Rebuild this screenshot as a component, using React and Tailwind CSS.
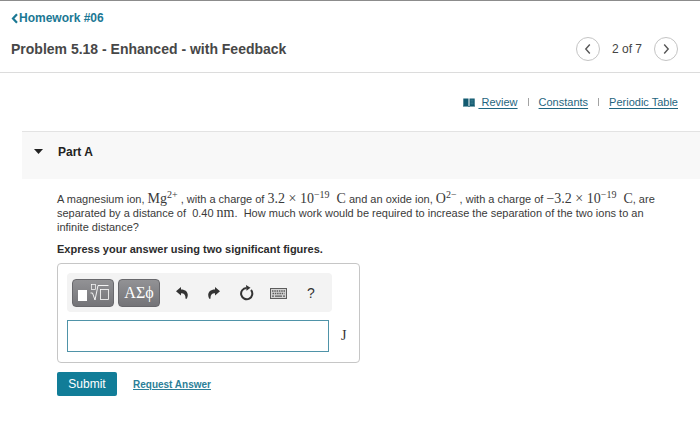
import { useState } from 'react';

const mathFont = "font-['Liberation_Serif',serif] text-sm leading-none";

function Sci({ sign, exponent }) {
  return (
    <span className={`${mathFont} whitespace-nowrap`}>
      {sign}3.2 × 10<sup className="text-[10px]">{exponent}</sup>&nbsp; C
    </span>
  );
}

function Ion({ symbol, charge }) {
  return (
    <span className={`${mathFont} whitespace-nowrap`}>
      {symbol}
      <sup className="text-[10px]">{charge}</sup>
    </span>
  );
}

function PageButton({ label, d }) {
  return (
    <button aria-label={label} className="flex size-6 items-center justify-center rounded-full border border-[#c4c4c4] text-[#555]">
      <svg className="size-3" viewBox="0 0 12 12" fill="none" stroke="currentColor" strokeWidth="1.4">
        <path d={d} />
      </svg>
    </button>
  );
}

function UndoIcon({ className = '' }) {
  return (
    <svg className={`h-3 w-3 ${className}`} viewBox="0 0 12 12" fill="currentColor">
      <path d="M5 0 0 4.200l5 4.300V6.300c3-.2 4.700 1.400 4.500 5.500h1.300C13.200 7 11.200 2.400 5 2.400Z" />
    </svg>
  );
}

function Header() {
  return (
    <header className="border-t border-b border-t-[#8c8c8c] border-b-[#dcdcdc] px-[11px] pt-[9px] pb-[11px]">
      <a href="#homework" className="flex h-4 w-fit items-center text-xs font-bold text-[#1b7894]">
        <svg className="h-[11px] w-2" viewBox="0 0 8 11" fill="none" stroke="currentColor" strokeWidth="2.2">
          <path d="M6 1.200 2 5.500 6 9.800" />
        </svg>
        Homework #06
      </a>
      <div className="mt-[11px] flex items-center justify-between pr-[11px]">
        <h1 className="text-sm font-bold text-[#474747]">Problem 5.18 - Enhanced - with Feedback</h1>
        <div className="flex items-center gap-3 text-xs text-[#444]">
          <PageButton label="Previous problem" d="M7.800 1.500 3.800 6l4 4.500" />
          <span>2 of 7</span>
          <PageButton label="Next problem" d="M4.200 1.500 8.200 6l-4 4.500" />
        </div>
      </div>
    </header>
  );
}

function ResourceLinks() {
  return (
    <nav className="flex h-[58px] items-center justify-end pr-[22px] text-[11px] text-[#1f6580]">
      <a href="#review" className="flex items-center">
        <svg className="mr-[3px] h-[9px] w-3" viewBox="0 0 12 9" fill="#125a70">
          <path d="M.3.500h5.200v7.600H.3ZM6.500.500h5.200v7.600H6.500Z" />
          <path d="M0 8.200h5l1 .5 1-.5h5" fill="none" stroke="#125a70" strokeWidth=".8" />
          <path d="M7.500 2.200h3M7.500 4h3M7.500 5.800h3" stroke="#5d98aa" strokeWidth=".6" />
        </svg>
        <span className="whitespace-pre underline underline-offset-2"> Review</span>
      </a>
      <span className="mx-[10px] h-2 w-px bg-[#a3a3a3]" />
      <a href="#constants" className="underline underline-offset-2">Constants</a>
      <span className="mx-[10px] h-2 w-px bg-[#a3a3a3]" />
      <a href="#periodic" className="underline underline-offset-2">Periodic Table</a>
    </nav>
  );
}

function AnswerBox() {
  const [answer, setAnswer] = useState('');
  const dark = 'flex h-7 w-[42px] items-center justify-center rounded border border-[#68686c] bg-linear-to-b from-[#929295] to-[#747478] text-white';

  return (
    <div className="mt-[7px] w-[303px] rounded border border-[#c6c6c6] px-[9px] pt-[9px] pb-[10px]">
      <div className="flex h-[39px] w-[265px] items-center rounded bg-[#f3f3f3] px-[5px] text-[#333]">
        <button aria-label="Templates" className={dark}>
          <svg className="h-5 w-8" viewBox="0 0 32 20" fill="none" stroke="#fff">
            <rect x="1" y="7" width="9" height="11" fill="#fff" stroke="none" />
            <rect x="14.500" y="1.500" width="4" height="5" strokeWidth=".7" />
            <path d="M13.500 10h2l2.500 7L21 2.500h10.500" strokeWidth=".9" />
            <rect x="23.500" y="6.500" width="8" height="10" strokeWidth=".8" />
          </svg>
        </button>
        <button className={`${dark} ml-1 font-['Liberation_Serif',serif] text-base`}>ΑΣϕ</button>
        <button aria-label="Undo" className="ml-4"><UndoIcon /></button>
        <button aria-label="Redo" className="ml-5"><UndoIcon className="-scale-x-100" /></button>
        <button aria-label="Reset" className="ml-5">
          <svg className="h-4 w-[14px]" viewBox="0 0 14 16" fill="none" stroke="currentColor" strokeWidth="2">
            <path d="M11 5a5.600 5.600 0 1 1-4.500-2" />
            <path d="M6 0 10.500 2.700 6.500 5.800Z" fill="currentColor" stroke="none" />
          </svg>
        </button>
        <button aria-label="Keyboard shortcuts" className="ml-4">
          <svg className="mt-0.5 h-[11px] w-[17px]" viewBox="0 0 17 11" fill="none" stroke="#5c5c5c">
            <rect x=".5" y=".5" width="16" height="10" fill="#d4d4d4" />
            <path d="M2 3h13M2.500 5.500h12" strokeDasharray="1.500 .8" strokeWidth="1.300" />
            <path d="M2 8.200h2M5 8.200h7M13 8.200h2" strokeWidth="1.300" />
          </svg>
        </button>
        <button aria-label="Help" className="ml-5 text-sm">?</button>
      </div>
      <div className="mt-2 flex items-center gap-3">
        <input
          id="work"
          aria-label="Work in joules"
          value={answer}
          onChange={(e) => setAnswer(e.target.value)}
          className="h-8 w-[262px] border border-[#4f93a8] bg-white px-2 text-sm outline-none"
        />
        <label htmlFor="work" className="font-['Liberation_Serif',serif] text-sm text-[#333]">J</label>
      </div>
    </div>
  );
}

export default function App() {
  return (
    <div className="bg-white font-['Liberation_Sans',Arial,sans-serif] text-[#3a3a3a]">
      <Header />
      <ResourceLinks />
      <main className="ml-[22px]">
        <button className="flex h-12 w-full items-center border-t border-[#e3e3e3] bg-[#f8f8f8] pb-2 pl-3 text-xs font-bold text-[#222]">
          <svg className="mr-[15px] h-[5px] w-[9px]" viewBox="0 0 9 5" fill="#222">
            <path d="M0 0h9L4.500 5Z" />
          </svg>
          Part A
        </button>
        <section className="pt-[13px] pr-[30px] pl-[35px]">
          <p className="text-[11px] leading-[14px]">
            A magnesium ion, <Ion symbol="Mg" charge="2+" /> , with a charge of <Sci sign="" exponent="−19" /> and an oxide
            ion, <Ion symbol="O" charge="2−" /> , with a charge of <Sci sign="−" exponent="−19" />, are{' '}
            <span>separated by a distance of &nbsp;0.40 </span>
            <span className="font-['Liberation_Serif',serif] text-sm leading-none">nm</span>
            <span>.&nbsp; How much work would be required to increase the separation of the two ions to an </span>
            <span>infinite distance?</span>
          </p>
          <p className="mt-2 text-[11px] leading-[14px] font-bold text-[#2c2c2c]">
            Express your answer using two significant figures.
          </p>
          <AnswerBox />
          <div className="mt-[9px] flex items-center gap-4 text-[11px]">
            <button className="h-6 w-[60px] rounded-xs bg-[#117d98] text-xs text-white">Submit</button>
            <a href="#answer" className="text-[10px] font-bold text-[#2c7f98] underline underline-offset-1">Request Answer</a>
          </div>
        </section>
      </main>
    </div>
  );
}
